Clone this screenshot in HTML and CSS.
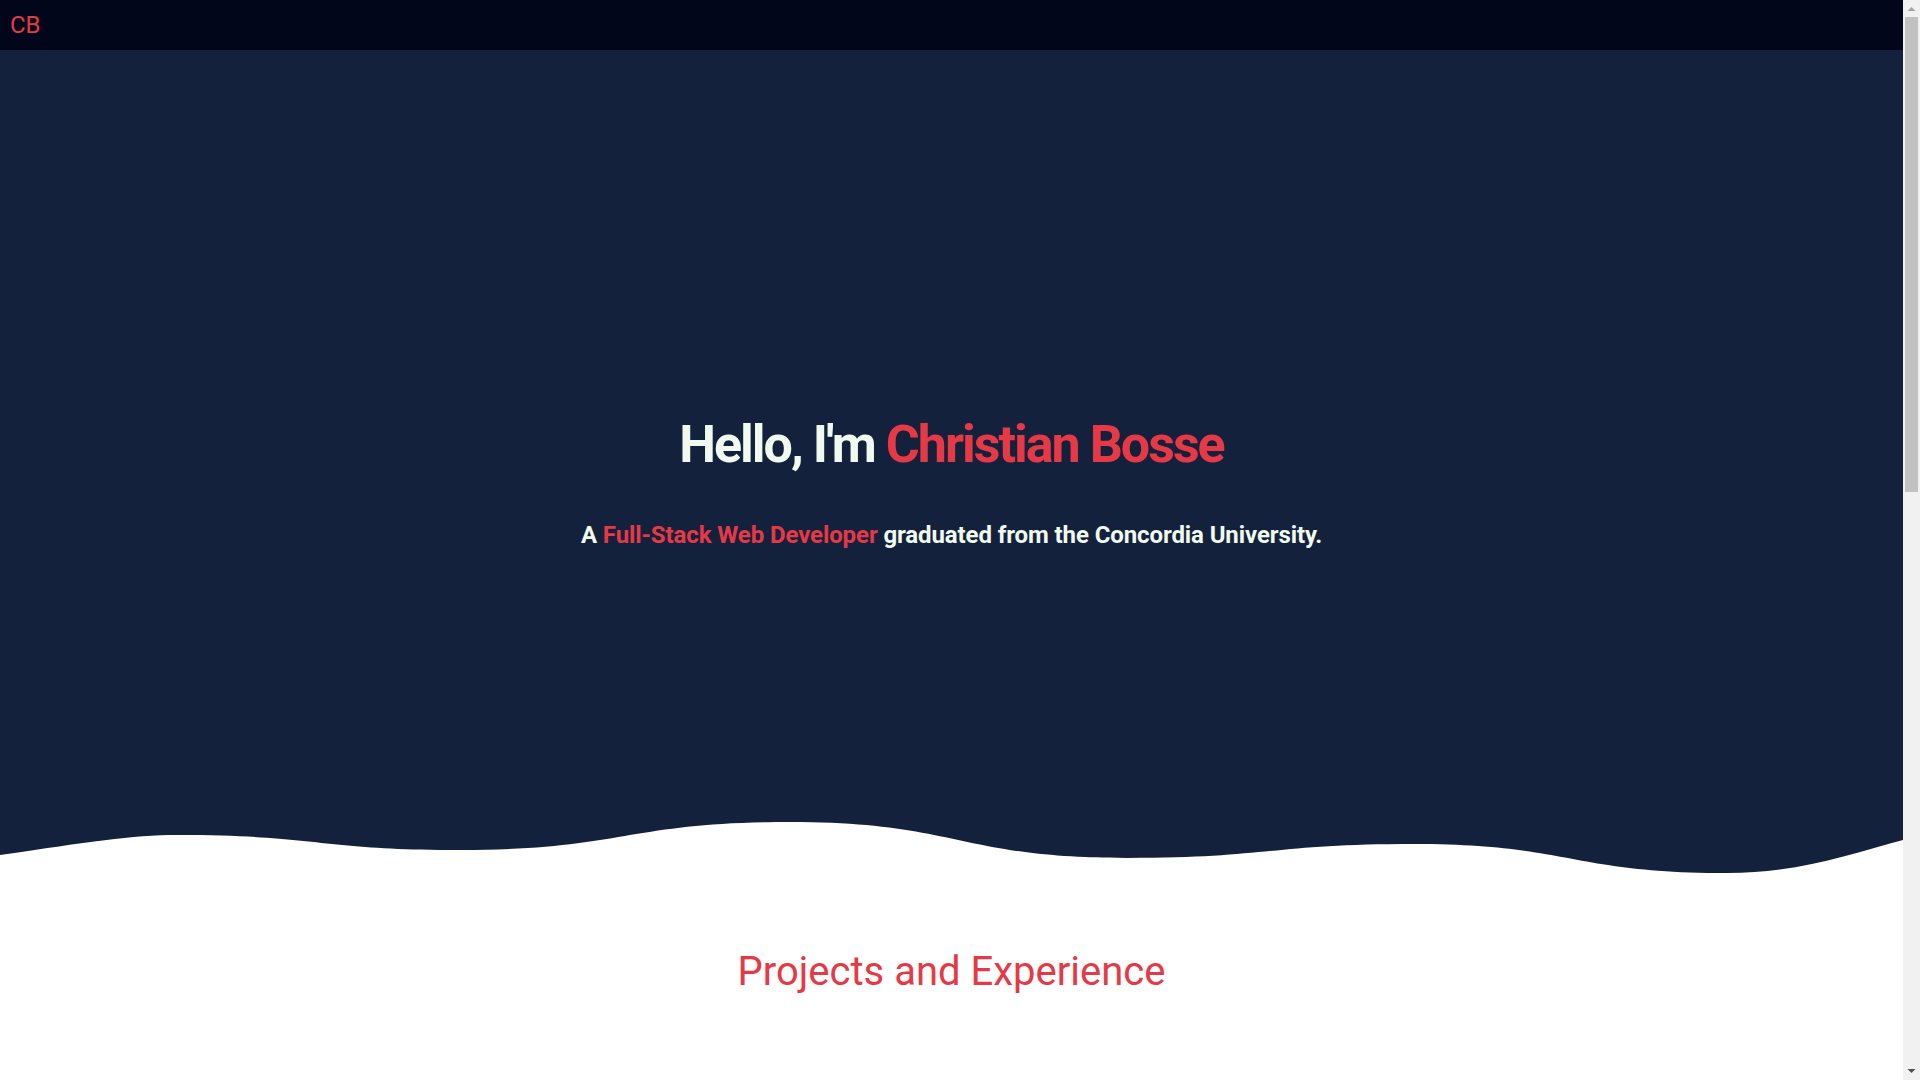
FILE: index.html
```html
<!DOCTYPE html>
<html lang="en">
<head>
<meta charset="utf-8">
<title>Christian Bosse</title>
<link rel="stylesheet" href="styles.css">
</head>
<body>
<div class="layout">
  <div class="page">
    <nav class="topbar">
      <a class="logo" href="#">CB</a>
    </nav>
    <header class="hero">
      <h1 class="hero-title">Hello, I'm <span class="accent">Christian Bosse</span></h1>
      <p class="hero-sub">A <span class="accent">Full-Stack Web Developer</span> graduated from the Concordia University.</p>
    </header>
    <svg class="wave" viewBox="0 0 1903 55" preserveAspectRatio="none" aria-hidden="true">
      <path d="M0,35 C90,22 130,15 178,15 C318,15 319,30 459,30 C624,30 625,2 790,2 C958,2 959,38 1127,38 C1270,38 1271,24 1414,24 C1570,24 1571,53 1727,53 C1800,53 1850,34 1903,20 L1903,0 L0,0 Z" fill="#14213d"/>
    </svg>
    <section class="projects">
      <h2 class="section-title">Projects and Experience</h2>
    </section>
  </div>
  <div class="scrollbar" aria-hidden="true">
    <div class="sb-arrow">
      <svg width="17" height="17" viewBox="0 0 17 17"><path d="M4.5 11 L8.5 7 L12.5 11 Z" fill="#a3a3a3"/></svg>
    </div>
    <div class="sb-track">
      <div class="sb-thumb"></div>
    </div>
    <div class="sb-arrow">
      <svg width="17" height="17" viewBox="0 0 17 17"><path d="M4.5 6 L8.5 10 L12.5 6 Z" fill="#505050"/></svg>
    </div>
  </div>
</div>
</body>
</html>
```
FILE: styles.css
```css
html, body {
  margin: 0;
  padding: 0;
  height: 100%;
  overflow: hidden;
}
body {
  font-family: Roboto, "Liberation Sans", Arial, sans-serif;
  background: #ffffff;
  color: #1d3557;
}
.layout {
  display: flex;
  height: 100vh;
}
.page {
  flex: 1;
  min-width: 0;
  overflow: hidden;
}
.scrollbar {
  width: 17px;
  flex: 0 0 17px;
  background: #f1f1f1;
  display: flex;
  flex-direction: column;
}
.sb-arrow {
  height: 17px;
  flex: 0 0 17px;
}
.sb-arrow svg {
  display: block;
}
.sb-track {
  flex: 1;
  padding: 0 2px;
}
.sb-thumb {
  height: 475px;
  background: #c1c1c1;
}
.topbar {
  height: 50px;
  background: #01061a;
  display: flex;
  align-items: center;
  padding: 0 10px;
}
.logo {
  color: #e63946;
  font-size: 24px;
  text-decoration: none;
  line-height: 1;
}
.hero {
  background: #14213d;
  height: 770px;
  box-sizing: border-box;
  padding-top: 364px;
  display: flex;
  flex-direction: column;
  align-items: center;
  margin: 0;
}
.hero-title {
  margin: 0;
  font-size: 52px;
  line-height: 62px;
  font-weight: 700;
  color: #f1faee;
  letter-spacing: -2px;
}
.hero-sub {
  margin: 45px 0 0;
  font-size: 24px;
  line-height: 29px;
  font-weight: 700;
  color: #f1faee;
  letter-spacing: -0.1px;
}
.accent {
  color: #e63946;
}
.wave {
  display: block;
  width: 100%;
  height: 55px;
}
.projects {
  min-height: 1500px;
  display: flex;
  flex-direction: column;
  align-items: center;
}
.section-title {
  margin: 73px 0 0;
  font-size: 40px;
  line-height: 48px;
  font-weight: 400;
  color: #e63946;
}
```
